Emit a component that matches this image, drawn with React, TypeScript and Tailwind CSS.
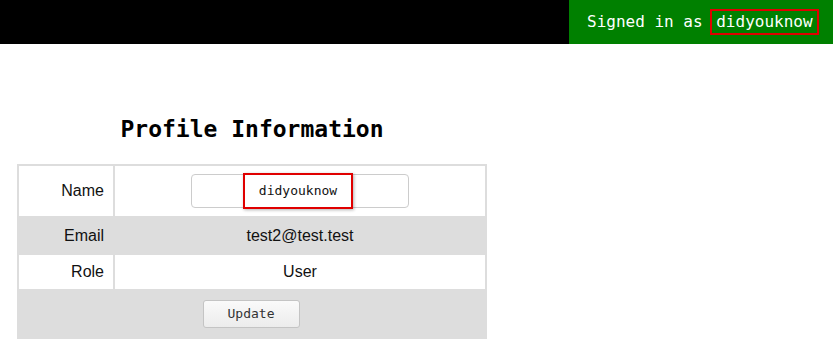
import React from 'react';

const mono = { fontFamily: '"DejaVu Sans Mono", monospace' };

export default function App() {
  return (
    <div className="w-[833px] h-[348px] bg-white" style={{ fontFamily: '"Liberation Sans", Arial, sans-serif' }}>
      <div className="flex h-[44px] bg-black justify-end">
        <div className="flex items-center w-[264px] bg-[#008000] pl-[18px] text-[16px] text-white" style={mono}>
          <span className="whitespace-pre">Signed in as </span>
          <span className="-ml-[2px] flex h-[26px] items-center border-2 border-[#e00000] px-[4px]">didyouknow</span>
        </div>
      </div>

      <div className="w-[470px] ml-[17px]">
        <h1 className="mt-[68px] mb-[18px] text-center text-[23px] font-bold leading-[34px] text-black" style={mono}>
          Profile Information
        </h1>

        <div className="grid grid-cols-[94px_1fr] gap-[2px] bg-[#dddddd] p-[2px] text-[16px] text-[#111]">
          <div className="flex h-[50px] items-center justify-end bg-white pr-[9px]">Name</div>
          <div className="flex h-[50px] items-center justify-center bg-white">
            <div className="relative flex h-[34px] w-[218px] items-center justify-center rounded-[4px] border border-[#cccccc] bg-white">
              <span
                className="-ml-[4px] flex h-[36px] items-center border-2 border-[#e00000] px-[14px] text-[13px] text-[#111] shadow-[1px_1px_3px_rgba(0,0,0,0.3)]"
                style={mono}
              >
                didyouknow
              </span>
            </div>
          </div>

          <div className="flex h-[35px] items-center justify-end bg-[#dddddd] pr-[9px]">Email</div>
          <div className="flex h-[35px] items-center justify-center bg-[#dddddd]">test2@test.test</div>

          <div className="flex h-[34px] items-center justify-end bg-white pr-[9px]">Role</div>
          <div className="flex h-[34px] items-center justify-center bg-white">User</div>

          <div className="col-span-2 flex h-[46px] items-center justify-center bg-[#dddddd]">
            <button
              className="-ml-[2px] h-[28px] w-[97px] rounded-[3px] border border-[#c4c4c4] bg-gradient-to-b from-[#fafafa] to-[#ececec] text-[13px] text-[#333]"
              style={mono}
            >
              Update
            </button>
          </div>
        </div>
      </div>
    </div>
  );
}
